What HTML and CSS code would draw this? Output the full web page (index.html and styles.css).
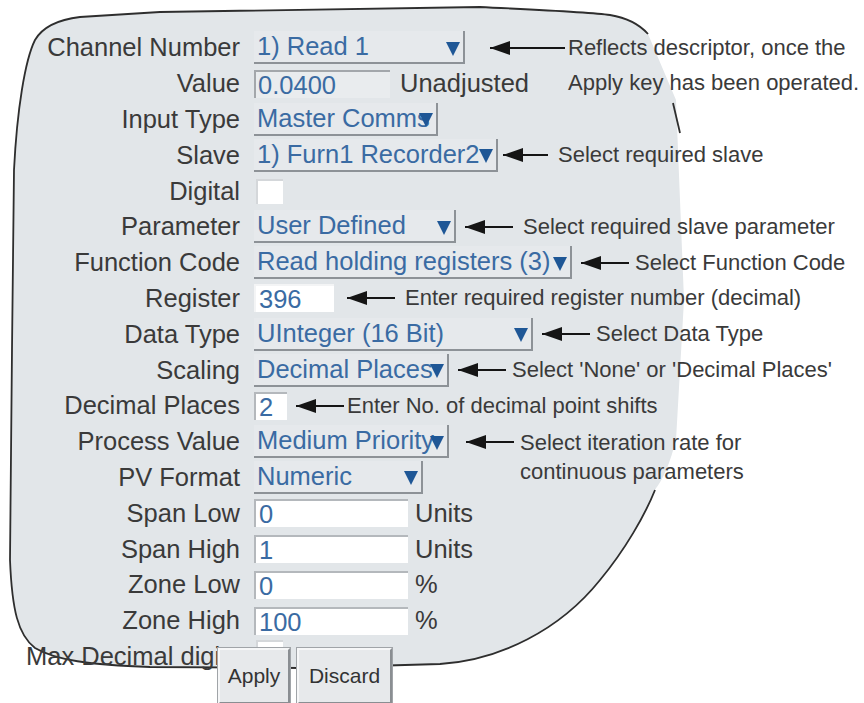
FILE: index.html
```html
<!DOCTYPE html>
<html lang="en">

<head>
    <meta charset="UTF-8" />
    <title>Channel Configuration - Master Comms</title>
    <link rel="stylesheet" href="styles.css">
</head>

<body>
    <div class="screen">

        <!-- torn-out screen panel behind the form -->
        <svg class="panel" width="864" height="703" viewBox="0 0 864 703">
            <path class="panel-fill"
                d="M35,40 C42,28 55,20 80,17 L160,12 L480,7 C540,10 590,12 610,15 C628,18 640,25 648,34
                   L676,100 L684,300 L676,440 C668,470 662,480 655,490
                   C645,515 625,550 600,580 C560,630 500,660 440,664 L300,668 L150,667
                   C90,665 55,660 35,648 C18,635 12,610 10,560 L12,350 L14,170 C17,110 25,60 35,40 Z" />
            <path class="panel-edge"
                d="M655,490 C645,515 625,550 600,580 C560,630 500,660 440,664 L300,668 L150,667
                   C90,665 55,660 35,648 C18,635 12,610 10,560 L12,350 L14,170 C17,110 25,60 35,40
                   C42,28 55,20 80,17 L160,12 L480,7 C540,10 590,12 610,15 C628,18 640,25 648,34" />
            <path class="panel-edge" d="M673,103 L680,133" />
        </svg>

        <div class="form">
            <div class="row">
                <span class="label">Channel Number</span>
                <span class="select w-channel"><span class="select-text">1) Read 1</span><i class="caret"></i></span>
                <span class="arrow arrow-long"></span>
                <span class="note note-multi note-tight">Reflects descriptor, once the<br>Apply key has been operated.</span>
            </div>
            <div class="row">
                <span class="label">Value</span>
                <span class="readout">0.0400</span>
                <span class="unit unit-adjust">Unadjusted</span>
            </div>
            <div class="row">
                <span class="label">Input Type</span>
                <span class="select w-input"><span class="select-text">Master Comms</span><i class="caret"></i></span>
            </div>
            <div class="row">
                <span class="label">Slave</span>
                <span class="select w-slave"><span class="select-text">1) Furn1 Recorder2</span><i class="caret"></i></span>
                <span class="arrow arrow-near"></span>
                <span class="note note-loose">Select required slave</span>
            </div>
            <div class="row">
                <span class="label">Digital</span>
                <span class="input check"></span>
            </div>
            <div class="row">
                <span class="label">Parameter</span>
                <span class="select w-param"><span class="select-text">User Defined</span><i class="caret"></i></span>
                <span class="arrow"></span>
                <span class="note note-loose">Select required slave parameter</span>
            </div>
            <div class="row">
                <span class="label">Function Code</span>
                <span class="select w-function"><span class="select-text">Read holding registers (3)</span><i class="caret"></i></span>
                <span class="arrow"></span>
                <span class="note">Select Function Code</span>
            </div>
            <div class="row">
                <span class="label">Register</span>
                <span class="input w-register">396</span>
                <span class="arrow arrow-far"></span>
                <span class="note note-loose">Enter required register number (decimal)</span>
            </div>
            <div class="row">
                <span class="label">Data Type</span>
                <span class="select w-data"><span class="select-text">UInteger (16 Bit)</span><i class="caret"></i></span>
                <span class="arrow"></span>
                <span class="note">Select Data Type</span>
            </div>
            <div class="row">
                <span class="label">Scaling</span>
                <span class="select w-scaling"><span class="select-text">Decimal Places</span><i class="caret"></i></span>
                <span class="arrow"></span>
                <span class="note">Select 'None' or 'Decimal Places'</span>
            </div>
            <div class="row">
                <span class="label">Decimal Places</span>
                <span class="input w-places">2</span>
                <span class="arrow"></span>
                <span class="note note-tight">Enter No. of decimal point shifts</span>
            </div>
            <div class="row">
                <span class="label">Process Value</span>
                <span class="select w-scaling"><span class="select-text">Medium Priority</span><i class="caret"></i></span>
                <span class="arrow arrow-farther"></span>
                <span class="note note-multi note-pv">Select iteration rate for<br>continuous parameters</span>
            </div>
            <div class="row">
                <span class="label">PV Format</span>
                <span class="select w-format"><span class="select-text">Numeric</span><i class="caret"></i></span>
            </div>
            <div class="row">
                <span class="label">Span Low</span>
                <span class="input w-span">0</span>
                <span class="unit">Units</span>
            </div>
            <div class="row">
                <span class="label">Span High</span>
                <span class="input w-span">1</span>
                <span class="unit">Units</span>
            </div>
            <div class="row">
                <span class="label">Zone Low</span>
                <span class="input w-span">0</span>
                <span class="unit">%</span>
            </div>
            <div class="row">
                <span class="label">Zone High</span>
                <span class="input w-span">100</span>
                <span class="unit">%</span>
            </div>
            <div class="row">
                <span class="label">Max Decimal digits</span>
                <span class="input check check-top"></span>
            </div>
        </div>

        <div class="buttons">
            <button class="btn btn-apply">Apply</button>
            <button class="btn btn-discard">Discard</button>
        </div>
    </div>
</body>

</html>
```

FILE: styles.css
```css
:root {
    --panel: #e2e6e9;
    --label: #3a3a3a;
    --value: #3a6ba3;
    --caret: #1f5796;
    --bevel-dark: #8d9297;
    --ink: #151515;
}

body {
    margin: 0;
    background: #fff;
    font-family: "Liberation Sans", Arial, sans-serif;
}

.screen {
    position: relative;
    width: 864px;
    height: 703px;
    overflow: hidden;
    background: #fff;
}

/* background panel */
.panel {
    position: absolute;
    top: 0;
    left: 0;
}

.panel-fill {
    fill: var(--panel);
}

.panel-edge {
    fill: none;
    stroke: #2e2e2e;
    stroke-width: 1.8;
}

/* form rows */
.form {
    position: relative;
    display: flex;
    flex-direction: column;
    padding-top: 30px;
}

.row {
    display: flex;
    align-items: center;
    height: 35.8px;
    font-size: 25.5px;
}

.label {
    flex: none;
    width: 240px;
    text-align: right;
    color: var(--label);
    white-space: nowrap;
}

/* drop-down fields */
.select {
    flex: none;
    display: flex;
    align-items: center;
    box-sizing: border-box;
    height: 33px;
    margin-left: 14px;
    padding-left: 3px;
    background: #e6e9ec;
    border-right: 2px solid var(--bevel-dark);
    border-bottom: 2px solid var(--bevel-dark);
    color: var(--value);
}

/* long values run under the caret, as on the recorder screen */
.select-text {
    flex: 1 1 auto;
    min-width: 0;
    white-space: nowrap;
}

.caret {
    flex: none;
    position: relative;
    width: 0;
    height: 0;
    margin: 4px 3px 0 -2px;
    border-left: 7px solid transparent;
    border-right: 7px solid transparent;
    border-top: 14px solid var(--caret);
}

.w-channel { width: 211px; }
.w-input { width: 184px; }
.w-slave { width: 244px; }
.w-param { width: 202px; }
.w-function { width: 318px; }
.w-data { width: 279px; }
.w-scaling { width: 195px; }
.w-format { width: 169px; }

/* read-only value */
.readout {
    flex: none;
    box-sizing: border-box;
    width: 136px;
    height: 28px;
    margin-left: 14px;
    padding-left: 2px;
    line-height: 26px;
    background: #e9ecee;
    border-top: 2px solid #a3a7ab;
    border-left: 2px solid #a3a7ab;
    color: var(--value);
}

/* edit boxes */
.input {
    flex: none;
    box-sizing: border-box;
    height: 28px;
    margin-left: 14px;
    padding-left: 3px;
    line-height: 27px;
    background: #fff;
    border-top: 2px solid #b4b8bc;
    border-left: 2px solid #b4b8bc;
    color: var(--value);
}

.w-register { width: 80px; border-color: #f3f4f5; }
.w-places { width: 33px; }
.w-span { width: 154px; }

.check {
    width: 27px;
    height: 25px;
    margin-left: 16px;
    border-color: #d4d7da;
}

.check-top {
    align-self: flex-start;
    margin-top: 1px;
}

.unit {
    margin-left: 7px;
    color: var(--label);
}

.unit-adjust {
    margin-left: 10px;
}

/* callouts */
.arrow {
    flex: none;
    position: relative;
    width: 48px;
    height: 2px;
    margin-left: 9px;
    background: var(--ink);
}

.arrow::before {
    content: '';
    position: absolute;
    left: 0;
    top: -6px;
    border-right: 20px solid var(--ink);
    border-top: 7px solid transparent;
    border-bottom: 7px solid transparent;
}

.arrow-long {
    width: 75px;
    margin-left: 25px;
}

.arrow-near {
    width: 45px;
    margin-left: 5px;
}

.arrow-far {
    margin-left: 13px;
}

.arrow-farther {
    margin-left: 17px;
}

.note {
    flex: none;
    margin-left: 6px;
    font-size: 22px;
    color: #3a3a3a;
    white-space: nowrap;
}

.note-tight { margin-left: 3px; }
.note-loose { margin-left: 10px; }

.note-multi {
    align-self: flex-start;
    line-height: 35px;
}

.note-pv {
    line-height: 29px;
    padding-top: 4px;
}

/* Apply / Discard */
.buttons {
    position: absolute;
    left: 218px;
    top: 648px;
    display: flex;
    gap: 7px;
}

.btn {
    box-sizing: border-box;
    height: 56px;
    padding: 0;
    font-family: inherit;
    font-size: 21px;
    color: #333;
    background: #e7e9eb;
    border: 2px solid;
    border-color: #f6f7f8 #8a8e92 #8a8e92 #f6f7f8;
    outline: 1px solid #a0a4a8;
}

.btn-apply { width: 72px; }
.btn-discard { width: 95px; }
```
